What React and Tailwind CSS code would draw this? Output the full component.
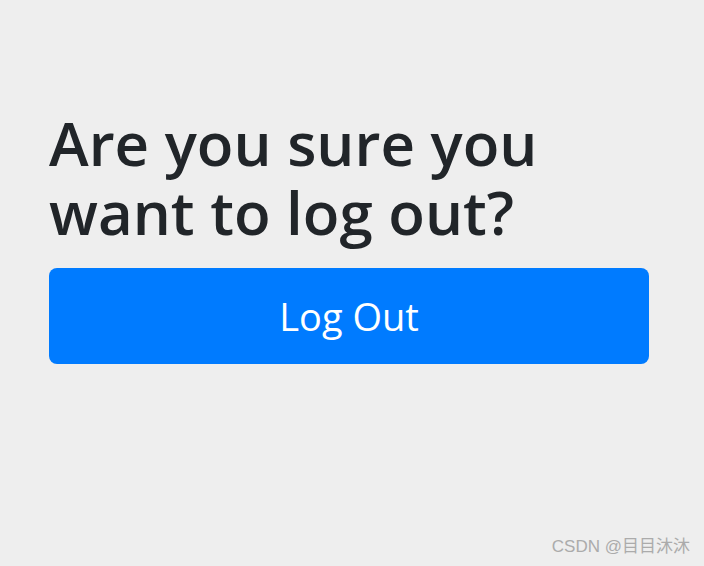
import React from 'react';

export default function App() {
  return (
    <div className="relative min-h-[566px] w-full bg-[#eeeeee] font-['Open_Sans',sans-serif] text-[#212529]">
      <div className="ml-[49px] w-[600px] pt-[109px]">
        <h1 className="text-[60px] font-semibold leading-[69px]">
          Are you sure you want to log out?
        </h1>
        <button className="mt-[21px] flex h-[96px] w-full items-center justify-center rounded-lg bg-[#007bff] text-[38px] text-white">
          Log Out
        </button>
      </div>
      <div className="absolute bottom-[7px] right-[14px] font-['Liberation_Sans','Noto_Sans_CJK_SC',sans-serif] text-[17px] text-[#ababab]">
        CSDN @目目沐沐
      </div>
    </div>
  );
}
